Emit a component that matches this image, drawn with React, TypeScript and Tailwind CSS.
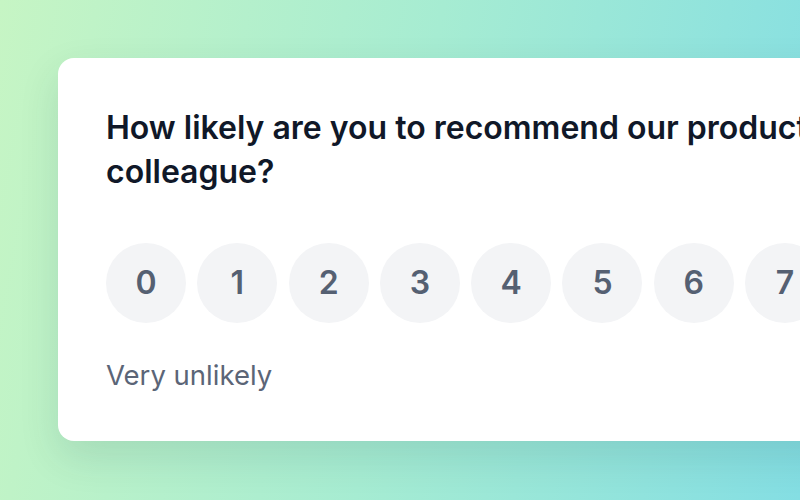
const scores = [0, 1, 2, 3, 4, 5, 6, 7, 8, 9, 10];

function NpsCard() {
  return (
    <div className="w-[1089px] shrink-0 self-start rounded-2xl bg-white p-12 shadow-[0_16px_40px_rgba(15,60,60,0.12)]">
      <h2 className="text-[32px] font-semibold leading-[44px] text-gray-900">
        How likely are you to recommend our product to a friend or colleague?
      </h2>

      <div className="mt-[49px] flex justify-between">
        {scores.map((score) => (
          <button
            key={score}
            className="flex h-20 w-20 items-center justify-center rounded-full bg-gray-100 text-[32px] font-semibold text-[#556072]"
          >
            {score}
          </button>
        ))}
      </div>

      <div className="mt-[34px] flex justify-between text-[27.5px] leading-9 text-[#5b6577]">
        <span>Very unlikely</span>
        <span>Very likely</span>
      </div>
    </div>
  );
}

export default function App() {
  return (
    <div
      className="flex h-[500px] w-[800px] overflow-hidden bg-[linear-gradient(100deg,#c6f5c4_0%,#a6ecd2_50%,#84dee3_100%)] pl-[58px] pt-[58px]"
      style={{ fontFamily: "Inter, 'Noto Sans', sans-serif" }}
    >
      <NpsCard />
    </div>
  );
}
